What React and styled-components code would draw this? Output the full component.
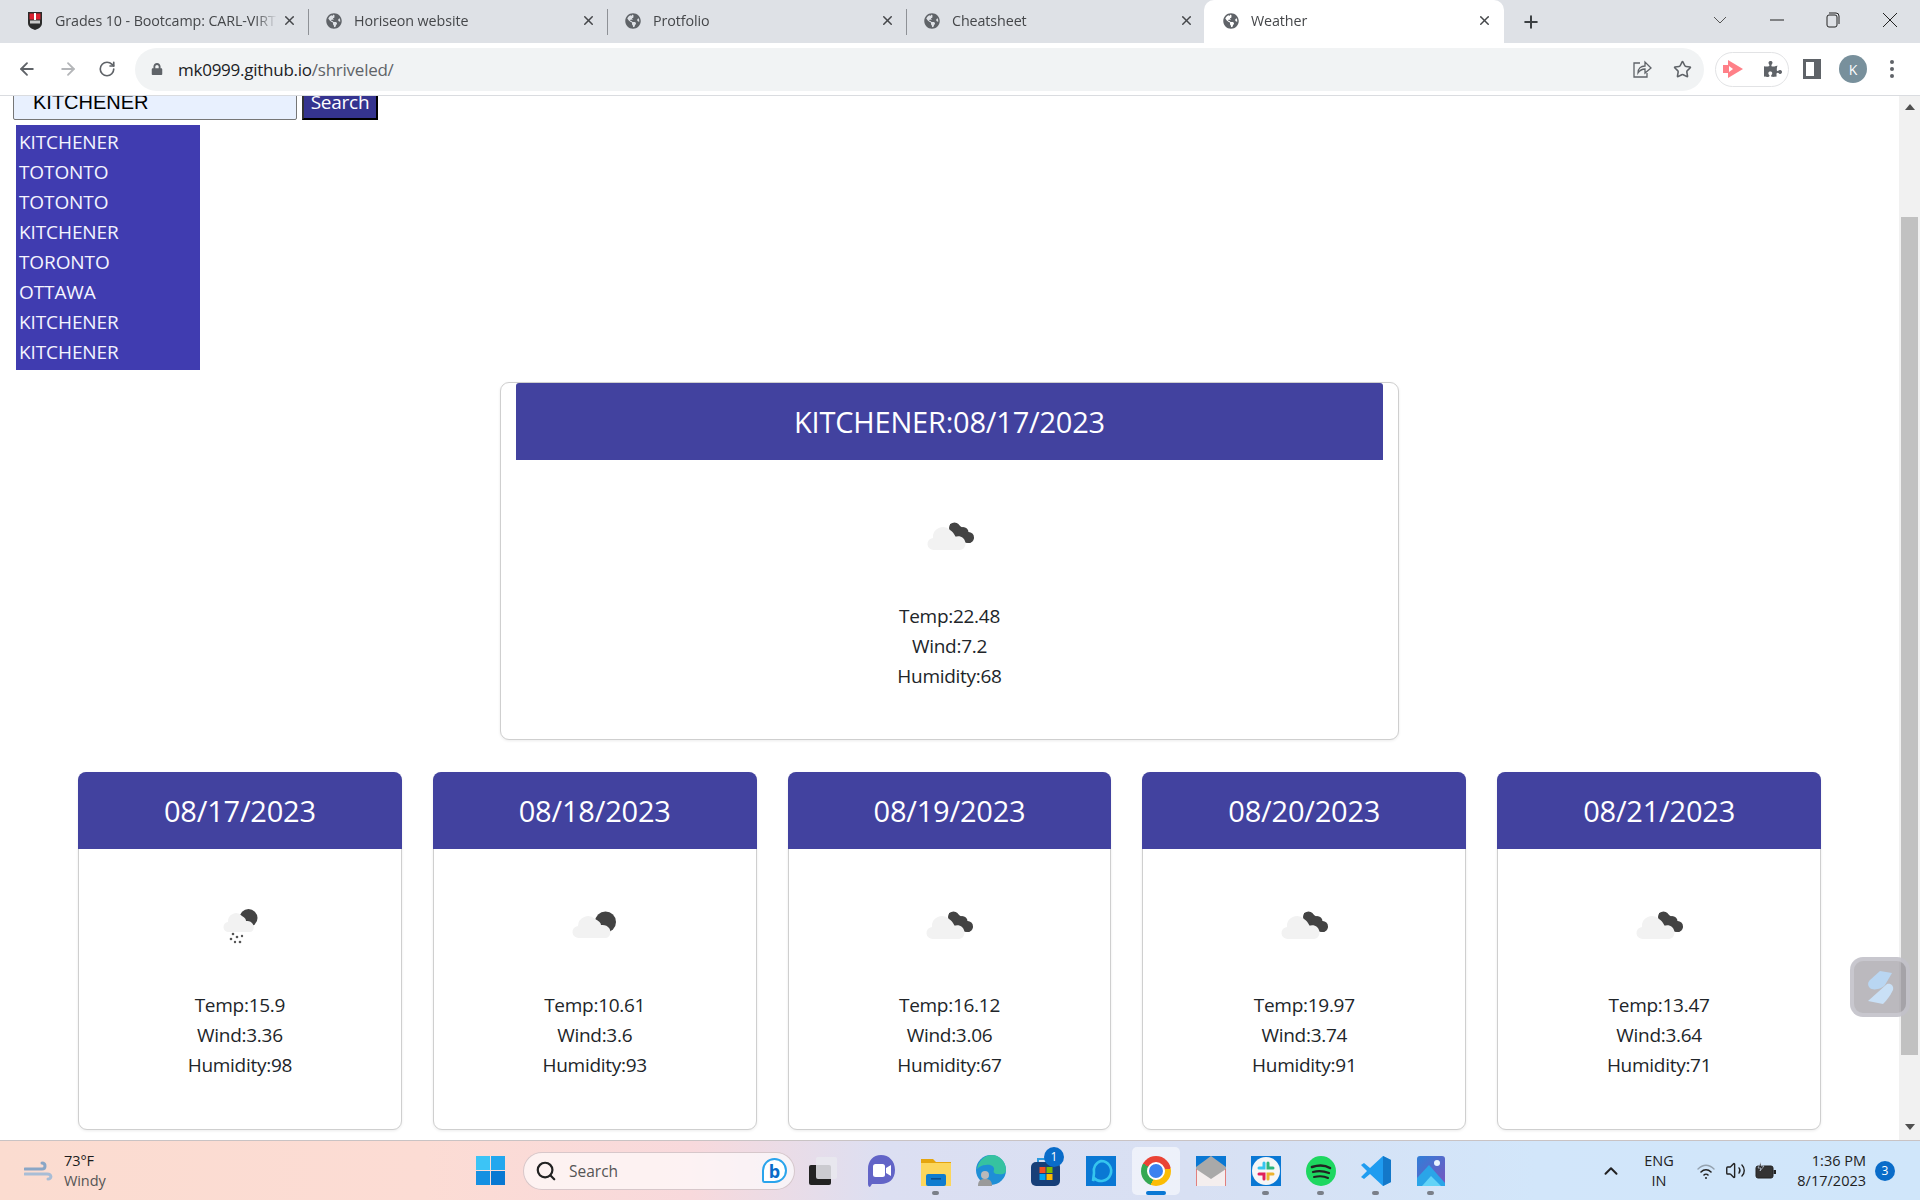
import React from "react";
import styled, { createGlobalStyle } from "styled-components";
import { FaGlobeAmericas, FaLock, FaPuzzlePiece } from "react-icons/fa";
import { ArrowLeft, ArrowRight, RotateCw, Star, Plus, X, Search as SearchIcon, ChevronUp, Volume2 } from "lucide-react";

const tabs = [
  { id: 1, title: "Grades 10 - Bootcamp: CARL-VIRTUAL", school: true },
  { id: 2, title: "Horiseon website" },
  { id: 3, title: "Protfolio" },
  { id: 4, title: "Cheatsheet" },
];

const history = ["KITCHENER", "TOTONTO", "TOTONTO", "KITCHENER", "TORONTO", "OTTAWA", "KITCHENER", "KITCHENER"];

const forecast = [
  { date: "08/17/2023", temp: "15.9", wind: "3.36", humidity: "98", icon: "rain" },
  { date: "08/18/2023", temp: "10.61", wind: "3.6", humidity: "93", icon: "moon" },
  { date: "08/19/2023", temp: "16.12", wind: "3.06", humidity: "67", icon: "broken" },
  { date: "08/20/2023", temp: "19.97", wind: "3.74", humidity: "91", icon: "broken" },
  { date: "08/21/2023", temp: "13.47", wind: "3.64", humidity: "71", icon: "broken" },
];

const WeatherIcon = ({ type }) => (
  <IconSvg viewBox="0 0 62 62">
    {type === "broken" && (
      <>
        <path d="M31 21l6-1 15 11 3 4-4 5-9-1-11-11z" fill="#434343" />
        <circle cx="35.5" cy="25" r="5.5" fill="#434343" />
        <circle cx="44" cy="29.5" r="5.5" fill="#434343" />
        <circle cx="49.5" cy="34.5" r="5.5" fill="#434343" />
        <path d="M15 47a6 6 0 0 1-1-12 10 10 0 0 1 17-8c4 3 5 5 5 7 2-1 6-1 8 1 4 3 3 12-3 12z" fill="#f2f2f2" />
      </>
    )}
    {type === "moon" && (
      <>
        <circle cx="41.500" cy="30" r="10.5" fill="#434343" />
        <path d="M15 46a6 6 0 0 1-1-12 10 10 0 0 1 17-7c4 2 6 4 6 6 2 0 5 0 7 2 4 3 3 11-3 11z" fill="#f2f2f2" />
      </>
    )}
    {type === "rain" && (
      <>
        <circle cx="39.5" cy="26" r="9" fill="#434343" />
        <path d="M20 40a5 5 0 0 1-1-10 8 8 0 0 1 14-6c3 2 4 3 4 5 2 0 4 0 6 2 3 3 2 9-2 9z" fill="#f2f2f2" />
        <g fill="#555">
          <circle cx="24" cy="42" r="1.3" />
          <circle cx="28" cy="45" r="1.3" />
          <circle cx="33" cy="44" r="1.200" />
          <circle cx="22" cy="47" r="1.3" />
          <circle cx="26" cy="50" r="1.200" />
          <circle cx="31" cy="50" r="1.3" />
        </g>
      </>
    )}
  </IconSvg>
);

const WeatherCard = ({ main, title, icon, temp, wind, humidity }) => (
  <Card $main={main}>
    <CardHeader $main={main}>{title}</CardHeader>
    <CardBody>
      <WeatherIcon type={icon} />
      <Reading>Temp:{temp}</Reading>
      <Reading>Wind:{wind}</Reading>
      <Reading>Humidity:{humidity}</Reading>
    </CardBody>
  </Card>
);

const SchoolIcon = () => (
  <svg width="18" height="20" viewBox="0 0 18 20">
    <path d="M2 1h14v11c0 4-4 6-7 7-3-1-7-3-7-7z" fill="#2b2b2b" />
    <rect x="3.5" y="2.5" width="11" height="6" fill="#d8202f" />
    <rect x="8" y="2" width="2" height="7" fill="#fff" />
    <rect x="4" y="9.5" width="10" height="3" fill="#c9c9c9" />
  </svg>
);

const App = () => {
  return (
    <>
      <GlobalStyle />
      <Screen>
        <TabStrip>
          {tabs.map((tab) => (
            <Tab key={tab.id}>
              <TabIcon>{tab.school ? <SchoolIcon /> : <FaGlobeAmericas size={16} color="#5f6368" />}</TabIcon>
              <TabTitle>{tab.title}</TabTitle>
              <X size={15} strokeWidth={2.4} color="#45474a" />
            </Tab>
          ))}
          <ActiveTab>
            <TabIcon>
              <FaGlobeAmericas size={16} color="#5f6368" />
            </TabIcon>
            <TabTitle>Weather</TabTitle>
            <X size={15} strokeWidth={2.4} color="#45474a" />
          </ActiveTab>
          <NewTab>
            <Plus size={20} strokeWidth={2.4} color="#3c4043" />
          </NewTab>
          <WindowControls>
            <svg width="16" height="10" viewBox="0 0 16 10">
              <path d="M2 2l6 6 6-6" fill="none" stroke="#555" />
            </svg>
            <svg width="14" height="14" viewBox="0 0 14 14">
              <path d="M0 7h14" stroke="#222" />
            </svg>
            <svg width="14" height="16" viewBox="0 0 14 16">
              <rect x="1" y="3" width="10" height="12" rx="2" fill="none" stroke="#222" />
              <path d="M3 1h7a3 3 0 0 1 3 3v8" fill="none" stroke="#222" />
            </svg>
            <svg width="16" height="16" viewBox="0 0 16 16">
              <path d="M1 1l14 14M15 1L1 15" stroke="#222" />
            </svg>
          </WindowControls>
        </TabStrip>

        <Toolbar>
          <NavButtons>
            <ArrowLeft size={20} color="#5f6368" strokeWidth={2.2} />
            <ArrowRight size={20} color="#b4b6b9" strokeWidth={2.2} />
            <RotateCw size={18} color="#5f6368" strokeWidth={2.2} />
          </NavButtons>
          <Omnibox>
            <FaLock size={12} color="#5f6368" />
            <Url>
              mk0999.github.io<UrlPath>/shriveled/</UrlPath>
            </Url>
            <OmniboxActions>
              <svg width="20" height="20" viewBox="0 0 20 20" fill="none" stroke="#5f6368" strokeWidth="1.3">
                <path d="M8 4H2v14h13v-4" />
                <path d="M6 14c0-5 3-7 7-7V3l6 6-6 5v-4c-3 0-5 1-7 4z" />
              </svg>
              <Star size={19} color="#5f6368" strokeWidth={2} />
            </OmniboxActions>
          </Omnibox>
          <ExtensionPill>
            <svg width="22" height="20" viewBox="0 0 22 20">
              <path d="M6 1l15 9-15 9v-5H1V6h5z" fill="#ff8088" />
              <path d="M7 7l4 3-4 3z" fill="#fff" />
            </svg>
            <FaPuzzlePiece size={18} color="#5f6368" />
          </ExtensionPill>
          <SidePanelIcon />
          <Avatar>K</Avatar>
          <MenuDots>
            <span />
            <span />
            <span />
          </MenuDots>
        </Toolbar>

        <Viewport>
          <Page>
            <SearchRow>
              <CityInput readOnly value="KITCHENER" />
              <SearchButton>Search</SearchButton>
            </SearchRow>
            <HistoryList>
              {history.map((city, index) => (
                <HistoryItem key={index}>{city}</HistoryItem>
              ))}
            </HistoryList>
            <WeatherCard
              main
              title="KITCHENER:08/17/2023"
              icon="broken"
              temp="22.48"
              wind="7.2"
              humidity="68"
            />
            <ForecastRow>
              {forecast.map((day) => (
                <WeatherCard
                  key={day.date}
                  title={day.date}
                  icon={day.icon}
                  temp={day.temp}
                  wind={day.wind}
                  humidity={day.humidity}
                />
              ))}
            </ForecastRow>
          </Page>
          <Scrollbar>
            <ArrowUp />
            <Thumb />
            <ArrowDown />
          </Scrollbar>
          <FloatingWidget>
            <svg width="52" height="52" viewBox="4 4 52 52">
              <path d="M30 14l12 2-7 12c-3 4-12 6-15 3-3-3-2-6 0-8z" fill="#b9d6f2" />
              <path d="M37 27c4-1 7 2 6 6-3 6-6 10-10 14l-15-3z" fill="#c9e0f6" />
            </svg>
          </FloatingWidget>
        </Viewport>

        <Taskbar>
          <WeatherWidget>
            <svg width="30" height="20" viewBox="0 0 30 20" fill="none" stroke="#8aa6c6" strokeWidth="3" strokeLinecap="round">
              <path d="M1 8h17c4 0 4-6 0-6" />
              <path d="M1 13h22c5 0 5 5 1 5" stroke="#a8bdd6" />
            </svg>
            <WeatherText>
              <Temp>73°F</Temp>
              <Condition>Windy</Condition>
            </WeatherText>
          </WeatherWidget>
          <StartLogo>
            <span />
            <span />
            <span />
            <span />
          </StartLogo>
          <SearchPill>
            <SearchIcon size={22} color="#222" strokeWidth={2.4} />
            <SearchLabel>Search</SearchLabel>
            <BingLogo>b</BingLogo>
          </SearchPill>
          <TaskIcons>
            <TaskSlot $gapAfter>
              <svg width="30" height="30" viewBox="0 0 30 30">
                <rect x="1" y="9" width="22" height="20" rx="2" fill="#222" />
                <rect x="8" y="1" width="21" height="22" rx="2" fill="#e9e9ee" fillOpacity="0.85" />
              </svg>
            </TaskSlot>
            <TaskSlot>
              <svg width="30" height="34" viewBox="0 0 30 34">
                <path d="M15 1c8 0 14 6 14 15s-6 14-14 14H6l-2 3c-1 0-2-1-2-3V15C2 7 7 1 15 1z" fill="#6264c7" />
                <rect x="7" y="10" width="12" height="13" rx="2.5" fill="#fff" />
                <path d="M20 14l5-3v11l-5-3z" fill="#fff" />
              </svg>
            </TaskSlot>
            <TaskSlot $dot>
              <svg width="30" height="30" viewBox="0 0 30 30">
                <path d="M0 3h12l3 3h15v24H0z" fill="#e5a50e" />
                <rect y="7" width="30" height="23" fill="#fcd65c" />
                <rect x="5" y="18" width="20" height="12" rx="2" fill="#0f7ccf" />
                <rect x="10" y="22" width="10" height="1.6" fill="#0a4f8f" />
              </svg>
            </TaskSlot>
            <TaskSlot>
              <EdgeLogo viewBox="0 0 30 32">
                <circle cx="15" cy="15" r="15" fill="#1f8fd6" />
                <path d="M1 14C3 4 10 0 16 0c8 0 14 7 14 15 0 4-4 5-8 4-4 0-5-2-4-4 1-3-3-6-8-5-4 0-7 2-9 4z" fill="#36c2a0" />
                <circle cx="9" cy="20" r="4" fill="#b9b9b9" />
                <path d="M2 31c0-6 3-7 7-7s7 1 7 7z" fill="#9a9a9a" />
              </EdgeLogo>
            </TaskSlot>
            <TaskSlot>
              <svg width="30" height="30" viewBox="0 0 30 30">
                <path d="M7 6V3h14v3" fill="none" stroke="#2d9be0" strokeWidth="2" />
                <rect y="6" width="29" height="24" rx="5" fill="#173f78" />
                <rect x="8.5" y="11" width="6" height="6" fill="#f25022" />
                <rect x="15.5" y="11" width="6" height="6" fill="#7fba00" />
                <rect x="8.5" y="18" width="6" height="6" fill="#00a4ef" />
                <rect x="15.5" y="18" width="6" height="6" fill="#ffb900" />
              </svg>
              <CountBadge $store>1</CountBadge>
            </TaskSlot>
            <TaskSlot>
              <svg width="30" height="30" viewBox="0 0 30 30">
                <rect width="30" height="30" fill="#0a78d4" />
                <path d="M15 5a10 10 0 1 1-7 17l-1 3 1-8a10 10 0 0 1 7-12z" fill="none" stroke="#35c5ee" strokeWidth="2.6" />
              </svg>
            </TaskSlot>
            <ActiveSlot>
              <ChromeLogo />
              <ActiveBar />
            </ActiveSlot>
            <TaskSlot>
              <svg width="30" height="30" viewBox="0 0 30 30">
                <rect width="30" height="30" fill="#0a78d4" />
                <path d="M0 11L15 0l15 11v19H0z" fill="#a9a9a9" />
                <path d="M0 13l15 10 15-10v17H0z" fill="#f4eeee" />
                <path d="M0 13v17M30 13v17" stroke="#d9524f" strokeWidth="1.4" />
              </svg>
            </TaskSlot>
            <TaskSlot $dot>
              <svg width="30" height="30" viewBox="0 0 30 30">
                <rect width="30" height="30" fill="#0a78d4" />
                <circle cx="15" cy="15" r="14" fill="#f6f6f6" />
                <g strokeWidth="3" strokeLinecap="round" fill="none">
                  <path d="M13 7v5H8" stroke="#36c5f0" />
                  <path d="M22 12h-5V7" stroke="#2eb67d" />
                  <path d="M8 18h5v5" stroke="#e01e5a" />
                  <path d="M17 23v-5h5" stroke="#ecb22e" />
                </g>
              </svg>
            </TaskSlot>
            <TaskSlot $dot>
              <svg width="30" height="30" viewBox="0 0 30 30">
                <circle cx="15" cy="15" r="15" fill="#1ed760" />
                <g fill="none" stroke="#222" strokeLinecap="round">
                  <path d="M6 11c6-2 13-2 18 1" strokeWidth="2.6" />
                  <path d="M7 16c5-1.500 11-1 16 1" strokeWidth="2.2" />
                  <path d="M8 21c5-1 10-1 14 1" strokeWidth="2" />
                </g>
              </svg>
            </TaskSlot>
            <TaskSlot $dot>
              <svg width="30" height="30" viewBox="0 0 30 30">
                <path d="M22 0l8 4v22l-8 4-13-12-6 5-3-2 6-6-6-6 3-2 6 5z" fill="#1f9cf0" />
                <path d="M22 0l8 4v22l-8 4z" fill="#1378c9" />
              </svg>
            </TaskSlot>
            <TaskSlot $dot>
              <svg width="28" height="30" viewBox="0 0 28 30">
                <defs>
                  <linearGradient id="photoBg" x1="0" y1="0" x2="1" y2="1">
                    <stop offset="0" stopColor="#2f7fd8" />
                    <stop offset="1" stopColor="#7a55bf" />
                  </linearGradient>
                </defs>
                <rect width="28" height="30" rx="3" fill="url(#photoBg)" />
                <circle cx="20" cy="7" r="3" fill="#e8f4ff" />
                <path d="M0 30V22L12 9l16 18v3z" fill="#2aa5e8" />
                <path d="M5 30l9-10 10 10z" fill="#62d3f7" />
              </svg>
            </TaskSlot>
          </TaskIcons>
          <Tray>
            <ChevronUp size={22} color="#222" strokeWidth={2.2} />
            <Language>
              <span>ENG</span>
              <span>IN</span>
            </Language>
            <TrayIcons>
              <svg width="20" height="20" viewBox="0 0 20 20" fill="none" stroke="#222" strokeLinecap="round">
                <path d="M2 8c5-5 11-5 16 0" strokeOpacity="0.35" strokeWidth="1.4" />
                <path d="M5 11c3-3 7-3 10 0" strokeWidth="1.6" />
                <path d="M8 14c1-1 3-1 4 0" strokeWidth="1.6" />
                <circle cx="10" cy="17" r="1" fill="#222" stroke="none" />
              </svg>
              <Volume2 size={21} color="#222" strokeWidth={1.6} />
              <svg width="22" height="18" viewBox="0 0 22 18">
                <rect x="1" y="4" width="17" height="12" rx="2" fill="#333" stroke="#222" />
                <rect x="18.500" y="8" width="2.500" height="4" fill="#222" />
                <path d="M6 0L3 6h3L5 9l4-5H6z" fill="#222" stroke="#dbe8fa" strokeWidth="0.6" />
              </svg>
            </TrayIcons>
            <Clock>
              <span>1:36 PM</span>
              <span>8/17/2023</span>
            </Clock>
            <CountBadge>3</CountBadge>
          </Tray>
        </Taskbar>
      </Screen>
    </>
  );
};

const GlobalStyle = createGlobalStyle`
  html, body {
    margin: 0;
    padding: 0;
    height: 100%;
    overflow: hidden;
    background: #fff;
  }
  * {
    box-sizing: border-box;
  }
`;

const uiFont = `"Open Sans", "Noto Sans", sans-serif`;

const Screen = styled.div`
  width: 1920px;
  height: 1200px;
  display: flex;
  flex-direction: column;
  font-family: ${uiFont};
  overflow: hidden;
`;

const TabStrip = styled.div`
  height: 43px;
  flex-shrink: 0;
  display: flex;
  align-items: stretch;
  padding-left: 10px;
  background: #dee1e6;
`;

const Tab = styled.div`
  width: 299px;
  display: flex;
  align-items: center;
  padding: 0 12px 2px 15px;
  position: relative;
  &:not(:nth-child(4))::after {
    content: "";
    position: absolute;
    right: 0;
    top: 9px;
    bottom: 8px;
    width: 1px;
    background: #8e9196;
  }
`;

const ActiveTab = styled(Tab)`
  width: 300px;
  margin-left: -2px;
  padding-left: 17px;
  background: #fff;
  border-radius: 10px 10px 0 0;
  &::after {
    display: none;
  }
`;

const TabIcon = styled.div`
  width: 20px;
  height: 20px;
  flex-shrink: 0;
  display: flex;
  align-items: center;
  justify-content: center;
  margin-right: 10px;
`;

const TabTitle = styled.div`
  flex: 1;
  min-width: 0;
  overflow: hidden;
  white-space: nowrap;
  font-size: 14.300px;
  letter-spacing: -0.1px;
  color: #45474a;
  mask-image: linear-gradient(to right, #000 88%, transparent 98%);
`;

const NewTab = styled.div`
  width: 54px;
  display: flex;
  align-items: center;
  justify-content: center;
`;

const WindowControls = styled.div`
  margin-left: auto;
  width: 206px;
  padding: 0 20px 3px 0;
  display: flex;
  align-items: center;
  justify-content: space-between;
  transform: translateX(-2px);
`;

const Toolbar = styled.div`
  height: 53px;
  flex-shrink: 0;
  display: flex;
  align-items: center;
  padding-left: 17px;
  background: #fff;
  border-bottom: 1px solid #dadce0;
`;

const NavButtons = styled.div`
  width: 118px;
  padding-right: 19px;
  display: flex;
  align-items: center;
  justify-content: space-between;
`;

const Omnibox = styled.div`
  width: 1569px;
  height: 43px;
  display: flex;
  align-items: center;
  padding: 0 12px 0 16px;
  background: #f1f3f4;
  border-radius: 22px;
`;

const Url = styled.div`
  margin-left: 15px;
  padding-top: 1px;
  font-size: 17px;
  letter-spacing: -0.25px;
  color: #202124;
`;

const UrlPath = styled.span`
  color: #5f6368;
`;

const OmniboxActions = styled.div`
  margin-left: auto;
  width: 60px;
  display: flex;
  align-items: center;
  justify-content: space-between;
`;

const ExtensionPill = styled.div`
  width: 74px;
  height: 35px;
  margin-left: 11px;
  padding: 0 6px 0 6px;
  display: flex;
  align-items: center;
  justify-content: space-between;
  border: 1px solid #e2e3e5;
  border-radius: 18px;
`;

const SidePanelIcon = styled.div`
  width: 18px;
  height: 20px;
  margin-left: 14px;
  border: 3px solid #5f6368;
  border-right-width: 7px;
`;

const Avatar = styled.div`
  width: 28px;
  height: 28px;
  margin-left: 18px;
  border-radius: 50%;
  display: flex;
  align-items: center;
  justify-content: center;
  background: #78909c;
  color: #fff;
  font-size: 14px;
`;

const MenuDots = styled.div`
  margin-left: 23px;
  display: flex;
  flex-direction: column;
  gap: 3px;
  span {
    width: 4px;
    height: 4px;
    border-radius: 50%;
    background: #5f6368;
  }
`;

const Viewport = styled.div`
  flex: 1;
  min-height: 0;
  display: flex;
  position: relative;
  background: #fff;
  overflow: hidden;
`;

const Page = styled.main`
  flex: 1;
  min-width: 0;
  display: flex;
  flex-direction: column;
  align-items: center;
`;

const SearchRow = styled.div`
  align-self: flex-start;
  display: flex;
  align-items: flex-start;
  margin: -12px 0 0 13px;
`;

const CityInput = styled.input`
  width: 284px;
  height: 36px;
  padding: 0 19px;
  background: #e8f0fe;
  border: 1px solid #767676;
  border-radius: 2px;
  color: #000;
  font-family: "Liberation Sans", Arial, sans-serif;
  font-size: 20px;
  outline: none;
`;

const SearchButton = styled.button`
  width: 76px;
  height: 36px;
  margin-left: 5px;
  padding: 2px 0 0;
  background: #35348f;
  border-width: 0 2.5px 2.5px 2px;
  border-style: solid;
  border-color: #333 #000 #000 #333;
  color: #fff;
  font-family: ${uiFont};
  font-size: 19px;
  letter-spacing: -0.25px;
`;

const HistoryList = styled.ul`
  align-self: flex-start;
  width: 184px;
  margin: 5px 0 0 16px;
  padding: 2px 0 3px 3px;
  list-style: none;
  background: #403cb0;
`;

const HistoryItem = styled.li`
  height: 30px;
  line-height: 30px;
  color: #f4f4ff;
  font-size: 19px;
  letter-spacing: -0.1px;
`;

const Card = styled.section`
  display: flex;
  flex-direction: column;
  height: 358px;
  background: #fff;
  border: 1px solid #cfcfcf;
  border-radius: 9px;
  box-shadow: 0 1px 3px rgba(0, 0, 0, 0.08);
  ${(props) =>
    props.$main
      ? `
    width: 899px;
    margin-top: 12px;
    flex-shrink: 0;
  `
      : `
    flex: 1;
    min-width: 0;
  `}
`;

const CardHeader = styled.h2`
  height: 77px;
  flex-shrink: 0;
  margin: ${(props) => (props.$main ? "0 15px" : "-1px -1px 0")};
  display: flex;
  align-items: center;
  justify-content: center;
  background: #42429f;
  border-radius: ${(props) => (props.$main ? "3px 3px 0 0" : "8px 8px 0 0")};
  color: #fff;
  font-size: 29px;
  font-weight: 400;
  letter-spacing: -0.2px;
`;

const CardBody = styled.div`
  flex: 1;
  display: flex;
  flex-direction: column;
  align-items: center;
  padding-top: 43px;
`;

const IconSvg = styled.svg`
  width: 62px;
  height: 62px;
  margin-bottom: 36px;
  filter: blur(0.4px);
`;

const Reading = styled.p`
  margin: 0;
  height: 30px;
  line-height: 30px;
  color: #212529;
  font-size: 19px;
  letter-spacing: -0.28px;
`;

const ForecastRow = styled.div`
  align-self: stretch;
  display: flex;
  gap: 31px;
  margin-top: 32px;
  padding: 0 78px;
`;

const Scrollbar = styled.div`
  width: 21px;
  flex-shrink: 0;
  display: flex;
  flex-direction: column;
  align-items: center;
  background: #f1f1f1;
`;

const ArrowUp = styled.div`
  margin-top: 8px;
  width: 0;
  height: 0;
  border-left: 5px solid transparent;
  border-right: 5px solid transparent;
  border-bottom: 6px solid #505050;
`;

const Thumb = styled.div`
  width: 17px;
  height: 838px;
  margin-top: 107px;
  background: #c1c1c1;
`;

const ArrowDown = styled.div`
  margin-top: auto;
  margin-bottom: 10px;
  width: 0;
  height: 0;
  border-left: 5px solid transparent;
  border-right: 5px solid transparent;
  border-top: 6px solid #505050;
`;

const FloatingWidget = styled.div`
  position: absolute;
  left: 1850px;
  top: 861px;
  width: 60px;
  height: 60px;
  display: flex;
  align-items: center;
  justify-content: center;
  background: rgba(150, 148, 155, 0.65);
  border: 4px solid rgba(205, 205, 212, 0.7);
  border-radius: 13px;
`;

const Taskbar = styled.footer`
  height: 60px;
  flex-shrink: 0;
  display: flex;
  align-items: center;
  position: relative;
  background: linear-gradient(
    90deg,
    #fbdcd0 0%,
    #fcdcd4 22%,
    #f8d9dc 36%,
    #dcdff2 46%,
    #d8e0f3 62%,
    #d2e6fa 80%,
    #d0e6fa 100%
  );
  border-top: 1px solid #c9c3c4;
`;

const WeatherWidget = styled.div`
  width: 476px;
  padding-left: 24px;
  display: flex;
  align-items: center;
  gap: 10px;
`;

const WeatherText = styled.div`
  display: flex;
  flex-direction: column;
  font-size: 14.500px;
  line-height: 20px;
  letter-spacing: -0.1px;
`;

const Temp = styled.span`
  color: #1c1c1c;
`;

const Condition = styled.span`
  color: #555;
`;

const StartLogo = styled.div`
  width: 29px;
  height: 29px;
  flex-shrink: 0;
  display: grid;
  grid-template-columns: 1fr 1fr;
  gap: 1px;
  span:nth-child(1) {
    background: #3cc4f6;
  }
  span:nth-child(2) {
    background: #22a7ee;
  }
  span:nth-child(3) {
    background: #1590e2;
  }
  span:nth-child(4) {
    background: #0878d2;
  }
`;

const SearchPill = styled.div`
  width: 272px;
  height: 38px;
  margin-left: 18px;
  padding: 0 7px 0 11px;
  flex-shrink: 0;
  display: flex;
  align-items: center;
  background: rgba(255, 255, 255, 0.65);
  border: 1px solid rgba(190, 170, 175, 0.6);
  border-radius: 19px;
`;

const SearchLabel = styled.span`
  flex: 1;
  margin-left: 12px;
  color: #555;
  font-size: 15.500px;
`;

const BingLogo = styled.span`
  width: 25px;
  height: 25px;
  display: flex;
  align-items: center;
  justify-content: center;
  background: #fff;
  border: 2px solid #2aa4ec;
  border-radius: 50% 50% 50% 10%;
  color: #0a6cc9;
  font-size: 18px;
  font-weight: 700;
  line-height: 1;
`;

const TaskIcons = styled.div`
  display: flex;
  align-items: center;
`;

const TaskSlot = styled.div`
  width: 55px;
  height: 48px;
  margin-right: ${(props) => (props.$gapAfter ? "3px" : "0")};
  flex-shrink: 0;
  position: relative;
  display: flex;
  align-items: center;
  justify-content: center;
  ${(props) =>
    props.$dot
      ? `
    &::after {
      content: "";
      position: absolute;
      left: 24px;
      bottom: 0;
      width: 7px;
      height: 4px;
      border-radius: 2px;
      background: #7a7f88;
    }
  `
      : ""}
`;

const ActiveSlot = styled(TaskSlot)`
  &::before {
    content: "";
    position: absolute;
    left: 4px;
    right: 3px;
    top: 0;
    bottom: 0;
    border-radius: 5px;
    background: rgba(255, 255, 255, 0.55);
  }
`;

const ActiveBar = styled.span`
  position: absolute;
  left: 18px;
  bottom: 0;
  width: 20px;
  height: 4px;
  border-radius: 2px;
  background: #0a78d4;
`;

const EdgeLogo = styled.svg`
  width: 30px;
  height: 32px;
`;

const ChromeLogo = styled.div`
  width: 30px;
  height: 30px;
  position: relative;
  border-radius: 50%;
  display: flex;
  align-items: center;
  justify-content: center;
  background: conic-gradient(#ea4335 0deg 80deg, #fbbc04 80deg 200deg, #34a853 200deg 300deg, #ea4335 300deg);
  &::after {
    content: "";
    width: 14px;
    height: 14px;
    border-radius: 50%;
    background: #3b82f0;
    border: 2.5px solid #fff;
    box-sizing: content-box;
  }
`;

const CountBadge = styled.span`
  width: 20px;
  height: 20px;
  flex-shrink: 0;
  margin-left: 9px;
  border-radius: 50%;
  display: flex;
  align-items: center;
  justify-content: center;
  background: #0a6cc9;
  color: #fff;
  font-size: 12px;
  ${(props) =>
    props.$store
      ? `
    position: absolute;
    top: 0;
    right: 9px;
    margin-left: 0;
  `
      : ""}
`;

const Tray = styled.div`
  margin-left: auto;
  width: 330px;
  padding-left: 10px;
  display: flex;
  align-items: center;
  color: #222;
  font-size: 14.500px;
`;

const Language = styled.div`
  width: 30px;
  margin-left: 22px;
  display: flex;
  flex-direction: column;
  align-items: center;
  line-height: 20px;
`;

const TrayIcons = styled.div`
  width: 81px;
  margin-left: 22px;
  display: flex;
  align-items: center;
  justify-content: space-between;
`;

const Clock = styled.div`
  width: 75px;
  margin-left: 14px;
  display: flex;
  flex-direction: column;
  align-items: flex-end;
  line-height: 20px;
  white-space: nowrap;
`;

export default App;
